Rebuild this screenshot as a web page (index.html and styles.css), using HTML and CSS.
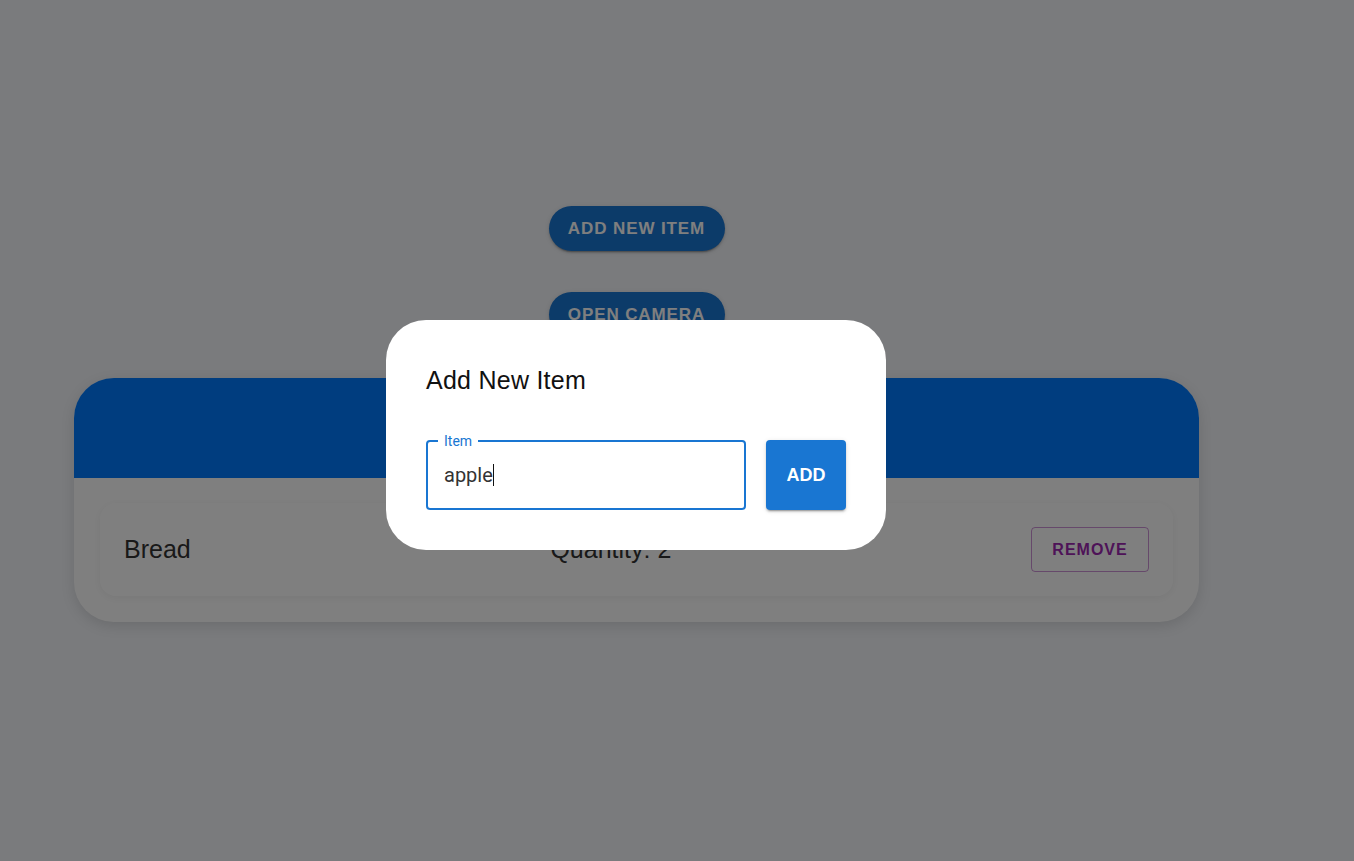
FILE: index.html
```html
<!DOCTYPE html>
<html lang="en">
<head>
<meta charset="utf-8">
<title>Shopping List</title>
<link rel="stylesheet" href="styles.css">
</head>
<body>
<main class="page">
  <div class="actions">
    <button class="pill-btn">Add New Item</button>
    <button class="pill-btn">Open Camera</button>
  </div>
  <section class="card">
    <div class="card-header"></div>
    <div class="card-body">
      <div class="row">
        <span class="row-name">Bread</span>
        <span class="row-qty">Quantity: 2</span>
        <button class="remove-btn">Remove</button>
      </div>
    </div>
  </section>
</main>
<div class="backdrop">
  <div class="dialog">
    <h2 class="dialog-title">Add New Item</h2>
    <div class="dialog-form">
      <div class="field">
        <span class="field-label">Item</span>
        <span class="field-value">apple</span><span class="caret"></span>
      </div>
      <button class="add-btn">Add</button>
    </div>
  </div>
</div>
</body>
</html>
```
FILE: styles.css
```css
* { box-sizing: border-box; }
html, body { margin: 0; height: 100%; }
body {
  background: #f4f6fa;
  font-family: "Liberation Sans", Arial, sans-serif;
  color: #333;
}
.page {
  width: 1125px;
  margin-left: 74px;
  padding-top: 206px;
}
.actions {
  display: flex;
  flex-direction: column;
  align-items: center;
  gap: 41px;
  margin-bottom: 41px;
}
.pill-btn {
  width: 176px;
  height: 45px;
  border: none;
  border-radius: 23px;
  background: #1976d2;
  color: #fff;
  font-family: "Liberation Sans", Arial, sans-serif;
  font-weight: 700;
  font-size: 17px;
  letter-spacing: 0.9px;
  text-transform: uppercase;
  box-shadow: 0 3px 1px -2px rgba(0,0,0,.2), 0 2px 2px 0 rgba(0,0,0,.14), 0 1px 5px 0 rgba(0,0,0,.12);
  padding: 0;
}
.card {
  border-radius: 40px;
  overflow: hidden;
  background: #fff;
  box-shadow: 0 4px 14px rgba(0,0,0,.12);
}
.card-header {
  height: 100px;
  background: #007bff;
}
.card-body {
  padding: 25px 26px 26px;
}
.row {
  display: flex;
  align-items: center;
  justify-content: space-between;
  padding: 24px;
  border-radius: 16px;
  box-shadow: 0 2px 10px rgba(0,0,0,.06);
  font-size: 25px;
  color: #333;
}
.remove-btn {
  height: 45px;
  width: 118px;
  background: transparent;
  border: 1px solid rgba(156,39,176,.5);
  border-radius: 4px;
  color: #9c27b0;
  font-family: "Liberation Sans", Arial, sans-serif;
  font-weight: 700;
  font-size: 16px;
  letter-spacing: 1px;
  text-transform: uppercase;
  padding: 0;
}
.backdrop {
  position: fixed;
  inset: 0;
  background: rgba(0,0,0,.5);
  display: flex;
  align-items: flex-start;
  justify-content: flex-start;
}
.dialog {
  margin-left: 386px;
  margin-top: 320px;
  width: 500px;
  background: #fff;
  border-radius: 40px;
  padding: 40px;
}
.dialog-title {
  margin: 0 0 40px;
  font-weight: 400;
  font-size: 25px;
  letter-spacing: 0.25px;
  line-height: 40px;
  color: #111;
}
.dialog-form {
  display: flex;
  gap: 20px;
}
.field {
  position: relative;
  width: 320px;
  height: 70px;
  border: 2px solid #1976d2;
  border-radius: 4px;
  padding: 0 16px;
  display: flex;
  align-items: center;
}
.field-label {
  position: absolute;
  left: 10px;
  top: -9px;
  padding: 0 6px;
  background: #fff;
  font-family: Roboto, "Liberation Sans", sans-serif;
  font-size: 14px;
  line-height: 16px;
  color: #1976d2;
}
.field-value {
  font-family: Roboto, "Liberation Sans", sans-serif;
  font-size: 20px;
  color: #333;
}
.caret {
  display: inline-block;
  width: 1px;
  height: 22px;
  background: #111;
}
.add-btn {
  width: 80px;
  height: 70px;
  border: none;
  border-radius: 4px;
  background: #1976d2;
  color: #fff;
  font-family: "Liberation Sans", Arial, sans-serif;
  font-weight: 700;
  font-size: 18px;
  text-transform: uppercase;
  box-shadow: 0 3px 1px -2px rgba(0,0,0,.2), 0 2px 2px 0 rgba(0,0,0,.14), 0 1px 5px 0 rgba(0,0,0,.12);
  padding: 0;
}
```
